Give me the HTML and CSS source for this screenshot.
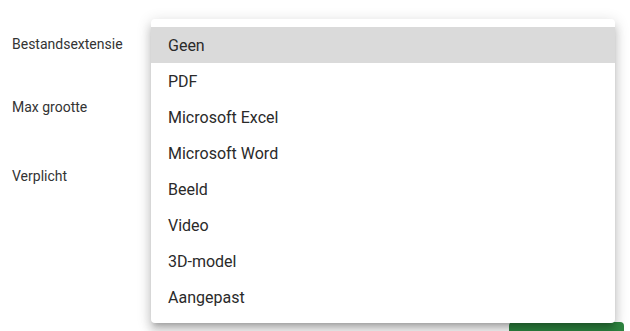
FILE: index.html
```html
<!DOCTYPE html>
<html lang="nl">

<head>
    <meta charset="UTF-8">
    <meta name="viewport" content="width=device-width, initial-scale=1.0">
    <title>Veld instellingen</title>
    <link rel="stylesheet" href="styles.css">
</head>

<body>
    <div class="page">
        <!-- Field settings form -->
        <div class="settings">
            <div class="row row-ext">
                <label class="field-label">Bestandsextensie</label>
            </div>
            <div class="row row-size">
                <label class="field-label">Max grootte</label>
            </div>
            <div class="row row-required">
                <label class="field-label">Verplicht</label>
            </div>
        </div>

        <div class="actions">
            <button class="save-btn" type="button" aria-label="Opslaan"></button>
        </div>

        <!-- Open select menu -->
        <ul class="select-menu">
            <li class="menu-item selected">Geen</li>
            <li class="menu-item">PDF</li>
            <li class="menu-item">Microsoft Excel</li>
            <li class="menu-item">Microsoft Word</li>
            <li class="menu-item">Beeld</li>
            <li class="menu-item">Video</li>
            <li class="menu-item">3D-model</li>
            <li class="menu-item">Aangepast</li>
        </ul>
    </div>
</body>

</html>
```

FILE: styles.css
```css
* {
    margin: 0;
    padding: 0;
    box-sizing: border-box;
    font-family: Roboto, 'Liberation Sans', sans-serif;
}

body {
    width: 630px;
    height: 331px;
    overflow: hidden;
    background-color: #fff;
}

.page {
    position: relative;
    height: 331px;
}

/* Form labels */
.settings {
    display: flex;
    flex-direction: column;
    padding: 35px 0 0 12px;
}

.row {
    height: 18px;
    display: flex;
    align-items: center;
}

.row-size {
    margin-top: 45px;
}

.row-required {
    margin-top: 51px;
}

.field-label {
    font-size: 14px;
    color: #333;
}

/* Save button peeking from under the menu */
.actions {
    display: flex;
    justify-content: flex-end;
    padding: 137px 6px 0 0;
}

.save-btn {
    width: 115px;
    height: 36px;
    border: none;
    border-radius: 4px;
    background-color: #2e8540;
}

/* Dropdown menu */
.select-menu {
    position: absolute;
    top: 19px;
    left: 151px;
    width: 464px;
    list-style: none;
    padding: 8px 0;
    background-color: #fff;
    border-radius: 4px;
    box-shadow: 0 5px 5px -3px rgba(0, 0, 0, 0.2), 0 8px 10px 1px rgba(0, 0, 0, 0.14), 0 3px 14px 2px rgba(0, 0, 0, 0.12);
}

.menu-item {
    height: 36px;
    display: flex;
    align-items: center;
    padding: 0 17px;
    font-size: 16px;
    color: #2a2a2a;
}

.menu-item.selected {
    background-color: #dadada;
}
```
